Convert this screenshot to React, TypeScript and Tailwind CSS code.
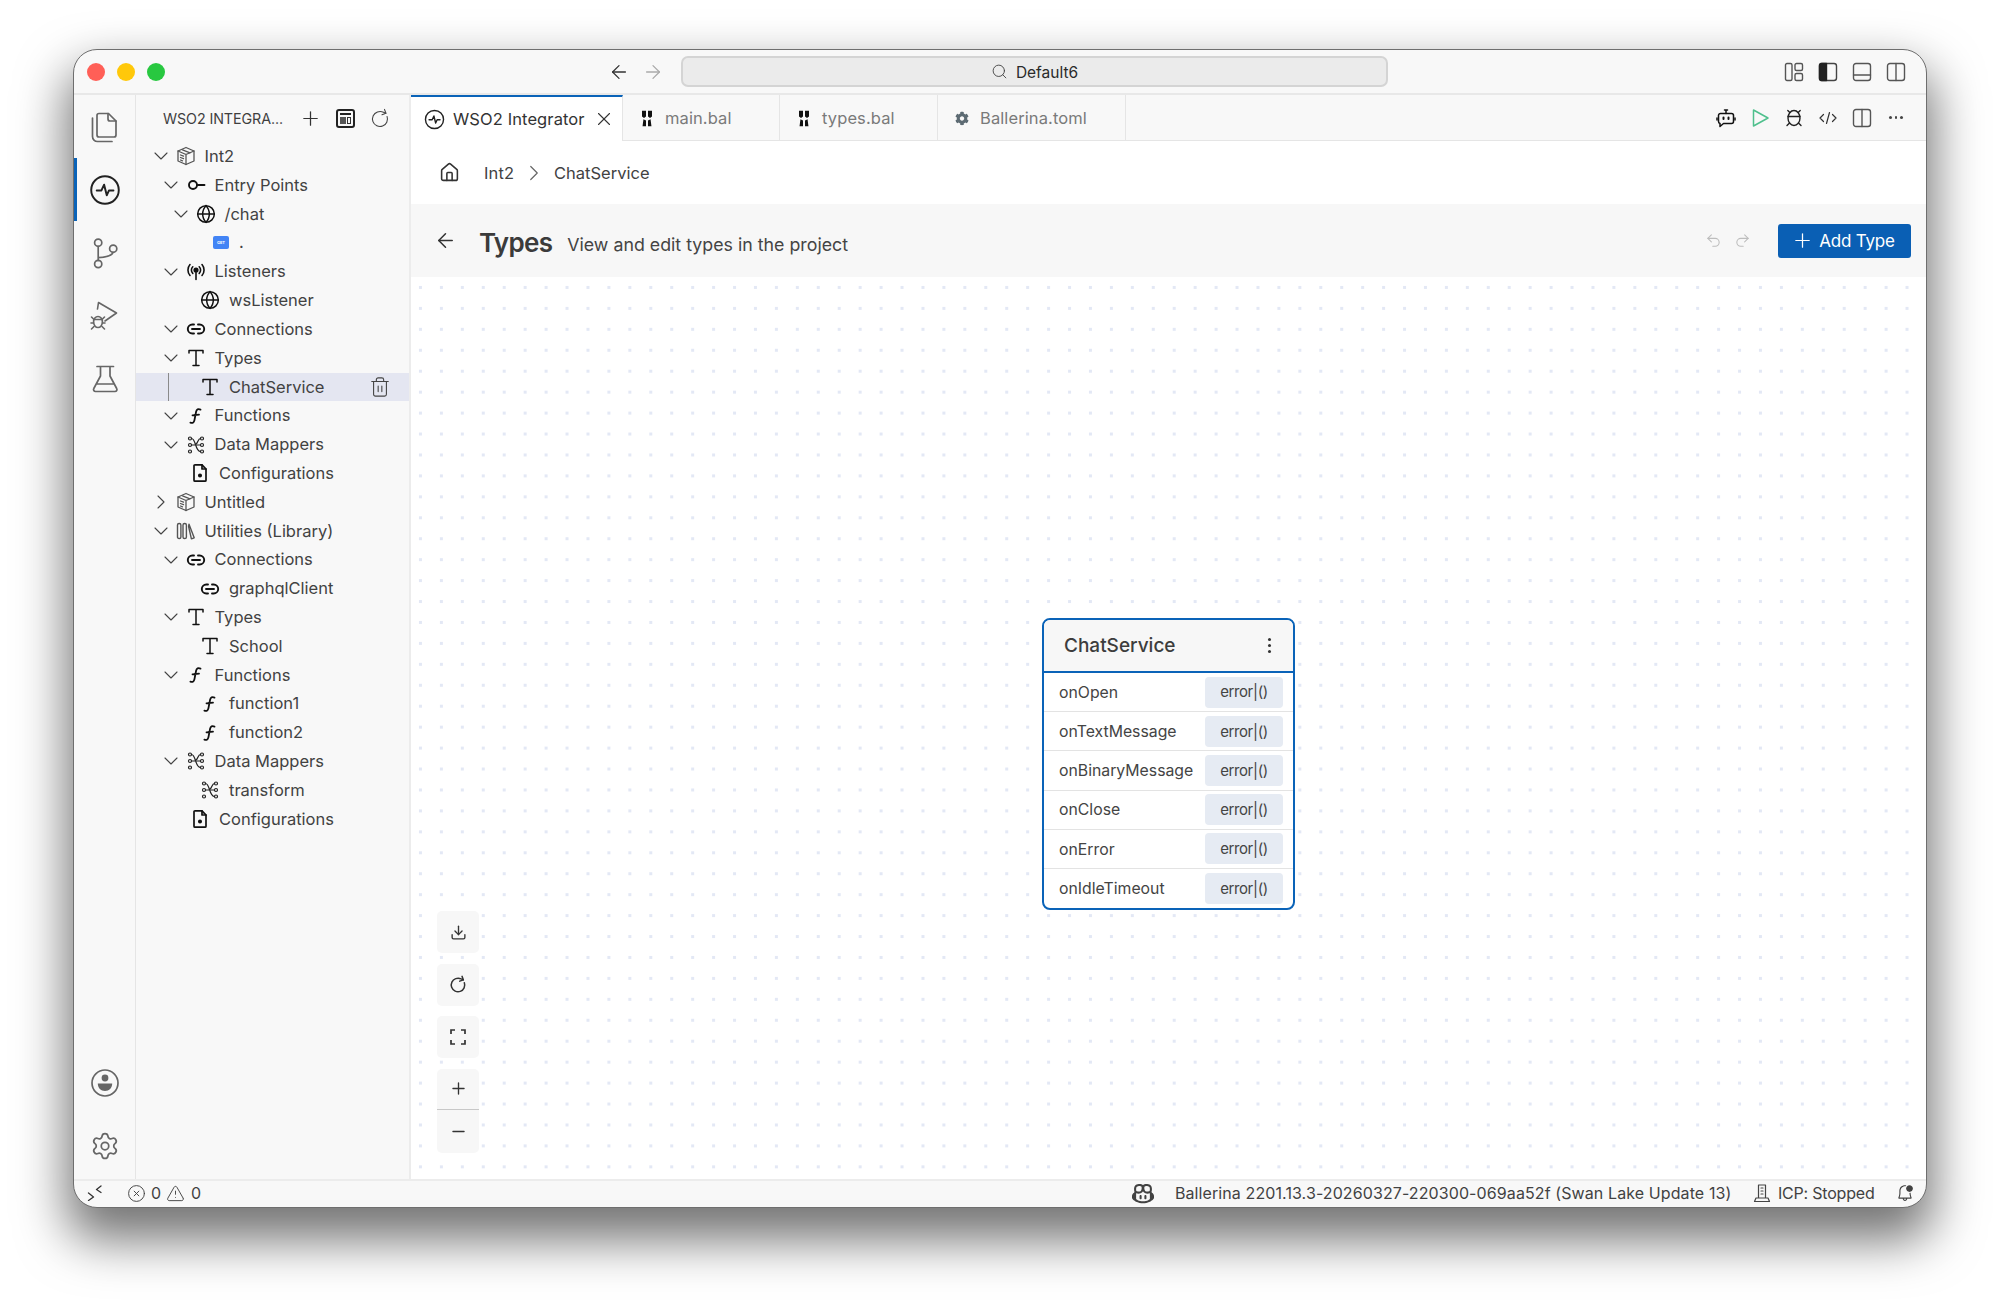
import React from 'react';
import { ChevronDown, ChevronRight, Globe, Settings, Plus, X, RotateCw, ArrowLeft, ArrowRight, Search, Trash2, Home, Undo2, Redo2, Download, Minus, CircleX, TriangleAlert } from 'lucide-react';
import { FaCog } from 'react-icons/fa';
import { VscCopilot, VscBellDot } from 'react-icons/vsc';

const Svg = ({ size = 20, box = 20, sw = 1.7, color = 'currentColor', children }: { size?: number; box?: number; sw?: number; color?: string; children: React.ReactNode }) => (
  <svg width={size} height={size} viewBox={`0 0 ${box} ${box}`} fill="none" stroke={color} strokeWidth={sw} strokeLinecap="round" strokeLinejoin="round">
    {children}
  </svg>
);

// tree icons
const CubeIcon = () => (
  <Svg sw={1.3} color="#555">
    <path d="M10 1.5 18 5v10l-8 3.5L2 15V5z" />
    <path d="M2 5l8 3.5L18 5M10 8.5v10" />
    <path d="M4.5 9l3 1.2M4.5 11.5l3 1.2M4.5 14l2 .8M6.5 3.8l7.5 3" />
  </Svg>
);
const EntryIcon = () => (
  <Svg color="#111" sw={1.9}>
    <circle cx="7" cy="10" r="4" />
    <path d="M11 10h7.5" />
  </Svg>
);
const GlobeIcon = () => <Globe size={20} strokeWidth={1.8} color="#111" />;
const ListenIcon = () => (
  <Svg color="#111" sw={1.6}>
    <circle cx="10" cy="8" r="1.8" fill="#111" />
    <path d="M10 10v7.5M6.8 4.8a4.6 4.6 0 0 0 0 6.6M13.2 4.8a4.6 4.6 0 0 1 0 6.6M4 2.5a8.4 8.4 0 0 0 0 11M16 2.5a8.4 8.4 0 0 1 0 11" />
  </Svg>
);
const LinkIcon = () => (
  <Svg color="#111" sw={1.9}>
    <path d="M8 5.5H6.3a4.5 4.5 0 0 0 0 9H8M12 5.5h1.7a4.5 4.5 0 0 1 0 9H12M6 10h8" />
  </Svg>
);
const TypeIcon = () => (
  <Svg color="#111" sw={1.5}>
    <path d="M3 5V2.5h14V5M10 2.5v15M7 17.5h6" />
  </Svg>
);
const FuncIcon = () => (
  <Svg color="#111" sw={1.8}>
    <path d="M14.5 3.6c-2.4-1-3.9-.2-4.4 2.2L8.4 14.4c-.5 2.4-2 3-4 2.2M6.5 9.4l6.5-.8" />
  </Svg>
);
const MapperIcon = () => (
  <Svg color="#222" sw={1.2}>
    <circle cx="4" cy="3.5" r="1.5" />
    <circle cx="16" cy="3.5" r="1.5" />
    <circle cx="4" cy="10" r="1.5" />
    <circle cx="16" cy="10" r="1.5" />
    <circle cx="4" cy="16.5" r="1.500" />
    <circle cx="16" cy="16.5" r="1.500" />
    <path d="M5.500 3.500c4.500 0 3.500 13 9 13M14.500 3.500c-3 0-2.500 6.500-6 6.500H5.500M11 10h3.500" />
  </Svg>
);
const ConfigIcon = () => (
  <Svg color="#111" sw={1.7}>
    <path d="M5 1.8h7l4 4.2v11.2a1 1 0 0 1-1 1H5a1 1 0 0 1-1-1V2.8a1 1 0 0 1 1-1z" />
    <path d="M12 1.8V6h4" />
    <circle cx="10" cy="12.5" r="1.2" fill="#111" />
  </Svg>
);
const LibraryIcon = () => (
  <Svg color="#555" sw={1.4}>
    <rect x="1.5" y="2.5" width="3.4" height="15" rx="1.6" />
    <rect x="7" y="2.5" width="3.4" height="15" rx="1.6" />
    <path d="M13 3.2l5.2 13.6-2.8 1L12.6 5.5z" />
  </Svg>
);
const GetBadge = () => (
  <div className="flex h-[13px] w-[16px] items-center justify-center rounded-[2px] bg-[#4284f5] text-[4px] font-bold leading-none text-white">GET</div>
);
const BalIcon = () => (
  <svg width="10" height="17" viewBox="0 0 11 17" fill="#111">
    <path d="M0 0h4.4v6.2L2.2 8 0 6.2zM6.6 0H11v6.2L8.8 8 6.6 6.2zM1.6 9.2l2.8 1.6V17H.6zM9.4 9.2l-2.8 1.6V17h3.800z" />
  </svg>
);
const PulseCircle = ({ size, sw }: { size: number; sw: number }) => (
  <Svg size={size} box={36} sw={sw} color="#222">
    <circle cx="18" cy="18" r="15.5" />
    <path d="M8.7 18.5H14l3-6.5 3 12 2.5-5.5h5" />
  </Svg>
);

// activity bar icons
const FilesIcon = () => (
  <Svg size={32} box={32} sw={1.7} color="#666">
    <path d="M10 2.5h9.5L27 10v14a2 2 0 0 1-2 2H10a2 2 0 0 1-2-2V4.500a2 2 0 0 1 2-2z" />
    <path d="M19 2.500V8a2 2 0 0 0 2 2h6" />
    <path d="M3.500 7v18.500a5 5 0 0 0 5 5H23" />
  </Svg>
);
const GitIcon = () => (
  <Svg size={32} box={32} sw={1.7} color="#666">
    <circle cx="9.200" cy="5.700" r="3.600" />
    <circle cx="9.200" cy="27" r="3.600" />
    <circle cx="24.200" cy="11.700" r="3.600" />
    <path d="M9.200 9.400v14M24 15.300c-1 4.200-8 5-14.800 5.400" />
  </Svg>
);
const RunDebugIcon = () => (
  <Svg size={32} box={32} sw={1.6} color="#666">
    <path d="M8.500 9l1-6.500L27.500 13 16 21" />
    <ellipse cx="9" cy="22" rx="4.400" ry="5.500" />
    <path d="M5 19.500h8M2.500 17l2.500 2.500M15.500 17 13 19.500M2 23h2.500M13.500 23H16M2.500 29 5 26.500M15.500 29 13 26.500" />
  </Svg>
);
const FlaskIcon = () => (
  <Svg size={32} box={32} sw={1.7} color="#666">
    <path d="M8 3.500h16.500M11.500 3.500V13L4.800 25.500A2 2 0 0 0 6.500 28.500H26a2 2 0 0 0 1.700-3L21 13V3.500M8 21h16.500" />
  </Svg>
);
const AccountIcon = () => (
  <Svg size={30} box={30} sw={1.7} color="#666">
    <circle cx="15" cy="15" r="13" />
    <circle cx="15" cy="10" r="3.400" fill="#666" stroke="none" />
    <path d="M7.800 15.500h14.400c0 4.500-3 7.500-7.200 7.500s-7.200-3-7.200-7.500z" fill="#666" stroke="none" />
  </Svg>
);

// title bar layout icons
const LayoutCustomIcon = () => (
  <Svg size={20} color="#555" sw={1.4}>
    <rect x="1.500" y="1.500" width="6.500" height="17" rx="1.500" />
    <rect x="11" y="1.500" width="7.500" height="7" rx="1.500" />
    <rect x="11" y="11.500" width="7.500" height="7" rx="1.500" />
  </Svg>
);
const LayoutLeftIcon = () => (
  <Svg size={20} color="#444" sw={1.4}>
    <rect x="1.500" y="1.500" width="17" height="17" rx="2.500" />
    <path d="M3 1.500h5.500v17H3a1.500 1.500 0 0 1-1.500-1.500V3A1.500 1.500 0 0 1 3 1.500z" fill="#222" stroke="#222" />
  </Svg>
);
const LayoutPanelIcon = () => (
  <Svg size={20} color="#555" sw={1.4}>
    <rect x="1.500" y="1.500" width="17" height="17" rx="2.500" />
    <path d="M1.500 13h17" />
  </Svg>
);
const SplitIcon = () => (
  <Svg size={20} color="#555" sw={1.4}>
    <rect x="1.500" y="1.500" width="17" height="17" rx="2.500" />
    <path d="M10 1.500v17" />
  </Svg>
);
const BotIcon = () => (
  <Svg size={20} color="#111" sw={1.5}>
    <path d="M4.500 5.500h11a2 2 0 0 1 2 2v6a2 2 0 0 1-2 2h-8l-3.500 3v-3a2 2 0 0 1-1.500-2v-6a2 2 0 0 1 2-2z" />
    <path d="M10 5.500V2.500M8.500 2h3M1 10v2M19 10v2" />
    <path d="M7.500 9.500v1.500M12.500 9.500v1.500" strokeWidth="2" />
  </Svg>
);
const BugIcon = () => (
  <Svg size={20} color="#222" sw={1.4}>
    <ellipse cx="10" cy="10" rx="6" ry="7.500" />
    <path d="M4 8.500h12M3.800 2.500l2 2M16.200 2.500l-2 2M3 17.500l2.500-2.500M17 17.500 14.500 15" />
  </Svg>
);
const CodeIcon = () => (
  <Svg size={20} color="#333" sw={1.2}>
    <path d="M5.500 6.500 2 10l3.500 3.500M14.500 6.500 18 10l-3.500 3.500M11.500 4.500l-3 11" />
  </Svg>
);
const RemoteIcon = () => (
  <Svg size={16} box={16} sw={1.300} color="#333">
    <path d="M1.500 8l5 4-5 3.500M14 1 9.500 4.500l4.500 3" />
  </Svg>
);
const IcpIcon = () => (
  <Svg size={20} color="#444" sw={1.2}>
    <path d="M6.500 2h7v13h-7zM4 15h12l1.500 3.500h-15z" />
    <path d="M9 5h2M9 8h2M9 11h2" />
  </Svg>
);

type Row = { label: string; icon: React.ReactNode; pad: string; gap?: string; chevron?: 'down' | 'right'; selected?: boolean };

const rows: Row[] = [
  { label: 'Int2', icon: <CubeIcon />, pad: 'pl-[15px]', chevron: 'down' },
  { label: 'Entry Points', icon: <EntryIcon />, pad: 'pl-[25px]', chevron: 'down' },
  { label: '/chat', icon: <GlobeIcon />, pad: 'pl-[35px]', chevron: 'down' },
  { label: '.', icon: <GetBadge />, pad: 'pl-[73px]', gap: 'ml-[6px]' },
  { label: 'Listeners', icon: <ListenIcon />, pad: 'pl-[25px]', chevron: 'down' },
  { label: 'wsListener', icon: <GlobeIcon />, pad: 'pl-[62px]' },
  { label: 'Connections', icon: <LinkIcon />, pad: 'pl-[25px]', chevron: 'down' },
  { label: 'Types', icon: <TypeIcon />, pad: 'pl-[25px]', chevron: 'down' },
  { label: 'ChatService', icon: <TypeIcon />, pad: 'pl-[62px]', selected: true },
  { label: 'Functions', icon: <FuncIcon />, pad: 'pl-[25px]', chevron: 'down' },
  { label: 'Data Mappers', icon: <MapperIcon />, pad: 'pl-[25px]', chevron: 'down' },
  { label: 'Configurations', icon: <ConfigIcon />, pad: 'pl-[52px]' },
  { label: 'Untitled', icon: <CubeIcon />, pad: 'pl-[15px]', chevron: 'right' },
  { label: 'Utilities (Library)', icon: <LibraryIcon />, pad: 'pl-[15px]', chevron: 'down' },
  { label: 'Connections', icon: <LinkIcon />, pad: 'pl-[25px]', chevron: 'down' },
  { label: 'graphqlClient', icon: <LinkIcon />, pad: 'pl-[62px]' },
  { label: 'Types', icon: <TypeIcon />, pad: 'pl-[25px]', chevron: 'down' },
  { label: 'School', icon: <TypeIcon />, pad: 'pl-[62px]' },
  { label: 'Functions', icon: <FuncIcon />, pad: 'pl-[25px]', chevron: 'down' },
  { label: 'function1', icon: <FuncIcon />, pad: 'pl-[62px]' },
  { label: 'function2', icon: <FuncIcon />, pad: 'pl-[62px]' },
  { label: 'Data Mappers', icon: <MapperIcon />, pad: 'pl-[25px]', chevron: 'down' },
  { label: 'transform', icon: <MapperIcon />, pad: 'pl-[62px]' },
  { label: 'Configurations', icon: <ConfigIcon />, pad: 'pl-[52px]' },
];

const TreeRow = ({ row }: { row: Row }) => (
  <div className={`relative flex h-[28.82px] items-center ${row.pad} ${row.selected ? 'bg-[#e4e6f1]' : ''}`}>
    {row.selected && <div className="absolute bottom-0 left-[32px] top-0 w-px bg-[#8a8a8a]" />}
    {row.chevron && (
      <div className="mr-[2.5px] flex w-[20px] justify-center text-[#444]">
        {row.chevron === 'down' ? <ChevronDown size={24} strokeWidth={1.1} className="shrink-0" /> : <ChevronRight size={24} strokeWidth={1.1} className="shrink-0" />}
      </div>
    )}
    <div className="flex w-[24px] justify-center">{row.icon}</div>
    <span className={`${row.gap ?? 'ml-[7px]'} text-[16.5px] text-[#424242]`}>{row.label}</span>
    {row.selected && (
      <div className="ml-auto mr-[18px] text-[#444]">
        <Trash2 size={22} strokeWidth={1.2} />
      </div>
    )}
  </div>
);

const Tab = ({ label, icon, width }: { label: string; icon: React.ReactNode; width: string }) => (
  <div className={`flex h-full items-center gap-[11px] border-b border-r border-[#e5e5e5] pl-[17px] pt-[2px] ${width}`}>
    <div className="flex w-[14px] justify-center">{icon}</div>
    <span className="text-[16.5px] tracking-[0.1px] text-[#7a7a7a]">{label}</span>
  </div>
);

const members = ['onOpen', 'onTextMessage', 'onBinaryMessage', 'onClose', 'onError', 'onIdleTimeout'];

const CanvasButton = ({ children }: { children: React.ReactNode }) => (
  <div className="flex h-[42px] w-[42px] items-center justify-center rounded-[5px] bg-[#f7f7f7] text-[#333]">{children}</div>
);

export default function App() {
  return (
    <div className="min-h-[1303px] bg-white pl-[73px] pt-[49px]" style={{ fontFamily: 'Inter, sans-serif' }}>
      <div className="flex h-[1159px] w-[1854px] flex-col overflow-hidden rounded-[24px] border border-[#6e6e6e] bg-[#f8f8f8] shadow-[0_26px_50px_6px_rgba(0,0,0,0.55)]">
        {/* title bar */}
        <div className="flex h-[45px] shrink-0 items-center border-b-2 border-[#e8e8e8] pl-[13px]">
          <div className="flex gap-[12px]">
            <div className="h-[18px] w-[18px] rounded-full bg-[#ff5f57]" />
            <div className="h-[18px] w-[18px] rounded-full bg-[#ffc80a]" />
            <div className="h-[18px] w-[18px] rounded-full bg-[#28c840]" />
          </div>
          <ArrowLeft size={22} strokeWidth={1.4} color="#333" className="ml-[443px]" />
          <ArrowRight size={22} strokeWidth={1.4} color="#aaa" className="ml-[12px]" />
          <div className="ml-[17px] flex h-[31px] w-[707px] items-center justify-center gap-[8px] rounded-[7px] border-2 border-[#d4d4d4] bg-[#ebebeb]">
            <Search size={17} strokeWidth={1.3} color="#444" />
            <span className="pt-[2px] text-[15.5px] text-[#2a2a2a]">Default6</span>
          </div>
          <div className="ml-[396px] flex items-center gap-[14px]">
            <LayoutCustomIcon />
            <LayoutLeftIcon />
            <LayoutPanelIcon />
            <SplitIcon />
          </div>
        </div>

        <div className="flex min-h-0 flex-1">
          {/* activity bar */}
          <div className="flex w-[62px] shrink-0 flex-col border-r border-[#e5e5e5] pb-[2px]">
            <div className="flex h-[63px] items-center justify-center"><FilesIcon /></div>
            <div className="flex h-[63px] items-center justify-center border-l-[3px] border-[#0a63b8] pr-[3px]"><PulseCircle size={32} sw={2.2} /></div>
            <div className="flex h-[63px] items-center justify-center"><GitIcon /></div>
            <div className="flex h-[63px] items-center justify-center"><RunDebugIcon /></div>
            <div className="flex h-[63px] items-center justify-center"><FlaskIcon /></div>
            <div className="mt-auto flex h-[63px] items-center justify-center"><AccountIcon /></div>
            <div className="flex h-[63px] items-center justify-center text-[#666]"><Settings size={30} strokeWidth={1.4} /></div>
          </div>

          {/* sidebar */}
          <div className="flex w-[275px] shrink-0 flex-col border-r-2 border-[#ececec]">
            <div className="flex h-[47px] shrink-0 items-center pl-[27px]">
              <span className="w-[119px] whitespace-nowrap text-[14.3px] tracking-[-0.1px] text-[#3f3f3f]">WSO2 INTEGRA...</span>
              <Plus size={23} strokeWidth={1.3} color="#333" className="ml-[17px]" />
              <div className="ml-[14px] flex h-[19px] w-[19px] flex-col gap-[2px] rounded-[3px] border-2 border-[#222] p-[2px]">
                <div className="h-[2px] w-full bg-[#222]" />
                <div className="flex flex-1 gap-[1px]"><div className="w-[6px] bg-[#555]" /><div className="flex-1 border border-[#333]" /></div>
              </div>
              <RotateCw size={20} strokeWidth={1.3} color="#444" className="ml-[15px] rotate-[-20deg]" />
            </div>
            {rows.map((row, i) => <TreeRow key={i} row={row} />)}
          </div>

          {/* main */}
          <div className="flex min-w-0 flex-1 flex-col bg-white">
            <div className="flex h-[46px] shrink-0 items-center bg-[#f8f8f8]">
              <div className="flex h-full w-[212px] items-center gap-[8px] border-r border-t-2 border-[#e5e5e5] border-t-[#0a63b8] bg-white pl-[13px]">
                <PulseCircle size={21} sw={2.400} />
                <span className="whitespace-nowrap text-[16.5px] tracking-[0.1px] text-[#333]">WSO2 Integrator</span>
                <X size={22} strokeWidth={1.2} color="#333" className="shrink-0" />
              </div>
              <Tab label="main.bal" icon={<BalIcon />} width="w-[157px]" />
              <Tab label="types.bal" icon={<BalIcon />} width="w-[158px]" />
              <Tab label="Ballerina.toml" icon={<FaCog size={15} color="#5d6b73" />} width="w-[188px]" />
              <div className="flex h-full flex-1 items-center justify-end gap-[14px] border-b border-[#e5e5e5] pr-[20px]">
                <BotIcon />
                <svg width="20" height="20" viewBox="0 0 20 20" fill="none" stroke="#4fc08d" strokeWidth="1.500" strokeLinejoin="round"><path d="M3.500 2v16L18 10z" /></svg>
                <BugIcon />
                <CodeIcon />
                <SplitIcon />
                <span className="flex w-[20px] justify-center gap-[3px]">
                  <i className="h-[2.500px] w-[2.500px] rounded-full bg-[#444]" />
                  <i className="h-[2.500px] w-[2.500px] rounded-full bg-[#444]" />
                  <i className="h-[2.500px] w-[2.500px] rounded-full bg-[#444]" />
                </span>
              </div>
            </div>

            {/* breadcrumb */}
            <div className="flex h-[63px] shrink-0 items-center pl-[28px] text-[16.5px] text-[#424242]">
              <Home size={21} strokeWidth={1.8} color="#333" />
              <span className="ml-[24px] mt-[2px] tracking-[0.1px]">Int2</span>
              <ChevronRight size={26} strokeWidth={1.1} color="#666" className="ml-[7px]" />
              <span className="ml-[7px] mt-[2px]">ChatService</span>
            </div>

            {/* page header */}
            <div className="flex h-[73px] shrink-0 items-center bg-[#f7f7f7] pl-[23px] pr-[15px]">
              <ArrowLeft size={23} strokeWidth={1.6} color="#333" />
              <span className="ml-[22px] mt-[3px] text-[26px] font-semibold tracking-[-0.7px] text-[#3b3b3b]">Types</span>
              <span className="ml-[15px] mt-[9px] text-[17.8px] text-[#444]">View and edit types in the project</span>
              <Undo2 size={17} strokeWidth={1.5} color="#bdbdbd" className="ml-auto" />
              <Redo2 size={17} strokeWidth={1.5} color="#bdbdbd" className="ml-[12px]" />
              <div className="ml-[27px] flex h-[34px] w-[133px] items-center justify-center gap-[5px] rounded-[3px] bg-[#0a5fb4] pr-[3px] text-white">
                <Plus size={23} strokeWidth={1.3} />
                <span className="mt-[2px] text-[17px] tracking-[-0.2px]">Add Type</span>
              </div>
            </div>

            {/* canvas */}
            <div className="relative min-h-0 flex-1 bg-[radial-gradient(circle,#e3e8f5_1.500px,transparent_1.600px)] bg-[size:20.950px_20.950px] bg-[position:-1px_0px]">
              <div className="absolute left-[631px] top-[341px] w-[253px] overflow-hidden rounded-[8px] border-2 border-[#0a63b8] bg-white">
                <div className="flex h-[53px] items-center justify-between border-b-2 border-[#0a63b8] bg-[#f7f7f7] pl-[20px] pr-[22px]">
                  <span className="mt-[1px] text-[19px] font-medium text-[#3d3d3d]">ChatService</span>
                  <div className="flex flex-col gap-[3px]">
                    <i className="h-[3px] w-[3px] rounded-full bg-[#333]" />
                    <i className="h-[3px] w-[3px] rounded-full bg-[#333]" />
                    <i className="h-[3px] w-[3px] rounded-full bg-[#333]" />
                  </div>
                </div>
                {members.map((m, i) => (
                  <div key={m} className={`flex h-[39.200px] items-center justify-between pl-[15px] pr-[10px] ${i < members.length - 1 ? 'border-b border-[#e3e3e3]' : ''}`}>
                    <span className="pt-[1px] text-[15.800px] text-[#444]">{m}</span>
                    <span className="flex h-[31px] w-[78px] items-center justify-center rounded-[4px] bg-[#e6ebf3] pt-[1px] text-[15px] tracking-[-0.4px] text-[#444]">error|()</span>
                  </div>
                ))}
              </div>

              <div className="absolute left-[26px] top-[634px] flex flex-col gap-[10.600px]">
                <CanvasButton><Download size={17} strokeWidth={1.900} /></CanvasButton>
                <CanvasButton><RotateCw size={18} strokeWidth={2} className="rotate-[-20deg]" /></CanvasButton>
                <CanvasButton>
                  <svg width="16" height="16" viewBox="0 0 16 16" fill="none" stroke="#333" strokeWidth="1.700"><path d="M1 5V1h4M11 1h4v4M15 11v4h-4M5 15H1v-4" /></svg>
                </CanvasButton>
                <div className="flex h-[84px] w-[42px] flex-col rounded-[5px] bg-[#f7f7f7] text-[#333]">
                  <div className="flex h-[41px] items-center justify-center border-b border-[#c8c8c8]"><Plus size={19} strokeWidth={1.700} /></div>
                  <div className="flex flex-1 items-center justify-center"><Minus size={19} strokeWidth={1.700} /></div>
                </div>
              </div>
            </div>
          </div>
        </div>

        {/* status bar */}
        <div className="flex h-[28px] shrink-0 items-center border-t-2 border-[#ececec] pb-[2px] pl-[13px] pr-[12.500px] text-[16px] text-[#424242]">
          <RemoteIcon />
          <CircleX size={19} strokeWidth={1.200} className="ml-[24px]" />
          <span className="ml-[5px]">0</span>
          <TriangleAlert size={19} strokeWidth={1.200} className="ml-[5px]" />
          <span className="ml-[6px]">0</span>
          <VscCopilot size={22} className="ml-auto" />
          <span className="ml-[21px] tracking-[0.1px]">Ballerina 2201.13.3-20260327-220300-069aa52f (Swan Lake Update 13)</span>
          <div className="ml-[20.500px]"><IcpIcon /></div>
          <span className="ml-[6px] tracking-[-0.2px]">ICP: Stopped</span>
          <VscBellDot size={18} className="ml-[21px]" />
        </div>
      </div>
    </div>
  );
}
